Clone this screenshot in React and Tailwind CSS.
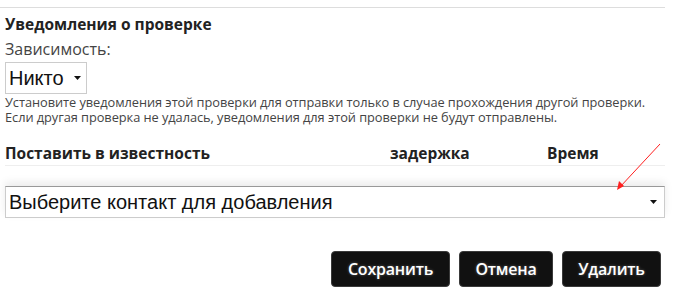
import React from 'react';

// Caret used in the native-looking selects
const Caret = ({ className = '' }) => (
  <svg width="7" height="4" viewBox="0 0 7 4" className={className}>
    <path d="M0 0 L7 0 L3.5 4 Z" fill="#111" />
  </svg>
);

const Button = ({ children, className = '' }) => (
  <button className={`h-[36px] rounded-[4px] bg-[#111] border border-[#3a3a3a] text-white text-[16px] font-semibold tracking-[-0.2px] [text-shadow:0_0_3px_rgba(255,255,255,0.35)] ${className}`}>
    {children}
  </button>
);

const App = () => {
  return (
    <div className="relative w-[691px] h-[293px] bg-white overflow-hidden text-[#333]" style={{ fontFamily: '"Open Sans", "Noto Sans", sans-serif' }}>
      <div className="w-[665px] pt-[7px]">
        <div className="border-t border-[#ddd]" />

        <div className="pl-[5px]">
          <h3 className="mt-[6px] text-[15.5px] leading-[20px] font-bold text-[#222]">Уведомления о проверке</h3>

          <div className="mt-[5px] text-[16px] leading-[20px] text-[#444]">Зависимость:</div>

          <div className="mt-[3px] w-[82px] h-[32px] border border-[#ccc] flex items-center pl-[3px] gap-[10px] text-[#111]" style={{ fontFamily: '"Liberation Sans", Arial, sans-serif' }}>
            <span className="text-[20px] leading-none">Никто</span>
            <Caret />
          </div>

          <div className="mt-[1px] text-[12.8px] leading-[14px] tracking-[-0.05px] text-[#444]">
            <p>Установите уведомления этой проверки для отправки только в случае прохождения другой проверки.</p>
            <p className="mt-[1px]">Если другая проверка не удалась, уведомления для этой проверки не будут отправлены.</p>
          </div>

          <div className="mt-[20px] flex items-end border-b border-[#eee] pb-[2px] text-[15.5px] leading-[19px] font-bold text-[#222]">
            <span className="w-[385px]">Поставить в известность</span>
            <span className="w-[157px]">задержка</span>
            <span>Время</span>
          </div>

          <div className="mt-[20px] h-[32px] border border-[#ccc] border-t-[#999] shadow-[0_-4px_8px_rgba(0,0,0,0.08)] flex items-center justify-between pl-[3px] pr-[7px] text-[#111]" style={{ fontFamily: '"Liberation Sans", Arial, sans-serif' }}>
            <span className="text-[20px] leading-none">Выберите контакт для добавления</span>
            <Caret />
          </div>

          <div className="mt-[33px] flex justify-end gap-[9px] pr-[4px]">
            <Button className="w-[119px]">Сохранить</Button>
            <Button className="w-[94px]">Отмена</Button>
            <Button className="w-[99px]">Удалить</Button>
          </div>
        </div>
      </div>

      {/* red annotation arrow */}
      <svg className="absolute left-0 top-0 pointer-events-none" width="691" height="293">
        <line x1="660" y1="144" x2="620" y2="187" stroke="#ff2020" strokeWidth="1" />
        <path d="M617 190 L619 181 L624 186 Z" fill="#ff2020" />
      </svg>
    </div>
  );
};

export default App;
